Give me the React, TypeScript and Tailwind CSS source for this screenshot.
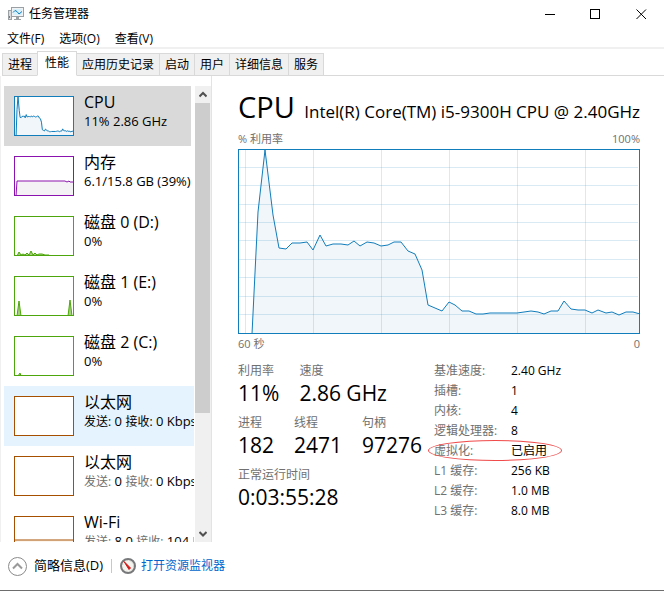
import React from "react";
import clsx from "clsx";

type Point = [number, number];

interface SparkProps {
  points: Point[];
  height: number;
  stroke: string;
  fill: string;
}

interface Resource {
  name: string;
  detail: React.ReactNode;
  stroke: string;
  fill: string;
  points: Point[];
  width?: number;
  height?: number;
  state?: "selected" | "hover";
}

const CHART_W = 402;
const CHART_H = 185;

const cpuPoints: Point[] = [
  [14, 185], [20, 63], [27, 1], [35, 66], [41, 99], [48, 100], [54, 94], [62, 94], [69, 93],
  [75, 101], [82, 86], [88, 97], [95, 95], [103, 95], [110, 96], [116, 92], [122, 97], [129, 93],
  [136, 94], [143, 97], [150, 96], [156, 93], [163, 93], [170, 102], [177, 105], [184, 121],
  [190, 156], [197, 159], [204, 162], [211, 153], [217, 156], [224, 162], [231, 162], [238, 165],
  [245, 165], [252, 164], [279, 164], [286, 163], [293, 162], [300, 163], [306, 165], [313, 162],
  [320, 162], [326, 152], [333, 160], [340, 161], [347, 161], [354, 164], [360, 161], [368, 164],
  [374, 163], [381, 166], [388, 163], [395, 163], [402, 165],
];

const gridX = [7, 75, 143, 211, 279, 347];
const gridY = [19, 37, 56, 74, 92, 111, 129, 148, 166];

const green = { stroke: "#4da60c", fill: "#a6d07f" };
const brown = { stroke: "#a74f01", fill: "#fdf6ee" };

const Rates = ({ send, receive, dark }: { send: string; receive: string; dark?: boolean }) => (
  <>
    <span className={clsx("text-[12px]", !dark && "text-[#707070]")}>发送:</span> {send}{" "}
    <span className={clsx("text-[12px]", !dark && "text-[#707070]")}>接收:</span> {receive}
  </>
);

const resources: Resource[] = [
  {
    name: "CPU",
    detail: "11% 2.86 GHz",
    stroke: "#117dbb",
    fill: "#f1f6fa",
    points: cpuPoints,
    width: CHART_W,
    height: CHART_H,
    state: "selected",
  },
  {
    name: "内存",
    detail: "6.1/15.8 GB (39%)",
    stroke: "#8b12ae",
    fill: "#f4f2f4",
    points: [[2, 40], [3, 25], [51, 25], [53, 26], [55, 25], [56, 26], [60, 26]],
  },
  {
    name: "磁盘 0 (D:)",
    detail: "0%",
    ...green,
    points: [
      [3, 40], [5, 36], [7, 39], [9, 38], [11, 39], [13, 37], [15, 39], [17, 35], [19, 39],
      [21, 37], [23, 39], [25, 38], [28, 38], [31, 39], [35, 39], [36, 40],
    ],
  },
  {
    name: "磁盘 1 (E:)",
    detail: "0%",
    ...green,
    points: [[3, 40], [5, 25], [7, 40], [54, 40], [56, 24], [58, 40]],
  },
  {
    name: "磁盘 2 (C:)",
    detail: "0%",
    ...green,
    points: [[4, 40], [6, 37], [7, 40]],
  },
  {
    name: "以太网",
    detail: <Rates send="0" receive="0 Kbps" dark />,
    ...brown,
    points: [],
    state: "hover",
  },
  {
    name: "以太网",
    detail: <Rates send="0" receive="0 Kbps" />,
    ...brown,
    points: [],
  },
  {
    name: "Wi-Fi",
    detail: <Rates send="8.0" receive="104 Kbps" />,
    stroke: "#a74f01",
    fill: "#fdf6ee",
    points: [[0, 24], [60, 24]],
  },
];

const tabs = ["进程", "性能", "应用历史记录", "启动", "用户", "详细信息", "服务"];

const stats = [
  [
    { label: "利用率", value: "11%" },
    { label: "速度", value: "2.86 GHz" },
  ],
  [
    { label: "进程", value: "182" },
    { label: "线程", value: "2471" },
    { label: "句柄", value: "97276" },
  ],
  [{ label: "正常运行时间", value: "0:03:55:28" }],
];

const specs = [
  { label: "基准速度:", value: "2.40 GHz" },
  { label: "插槽:", value: "1" },
  { label: "内核:", value: "4" },
  { label: "逻辑处理器:", value: "8" },
  { label: "虚拟化:", value: "已启用", circled: true },
  { label: "L1 缓存:", value: "256 KB" },
  { label: "L2 缓存:", value: "1.0 MB" },
  { label: "L3 缓存:", value: "8.0 MB" },
];

// Filled line, clipped by the box around it
const Spark = ({ points, height, stroke, fill }: SparkProps) => {
  if (!points.length) return null;
  const line = points.map((p) => p.join(",")).join(" ");
  const area = `${points[0][0]},${height} ${line} ${points[points.length - 1][0]},${height}`;
  return (
    <>
      <polygon points={area} fill={fill} />
      <polyline points={line} fill="none" stroke={stroke} vectorEffect="non-scaling-stroke" />
    </>
  );
};

const ResourceItem = ({ item }: { item: Resource }) => {
  const { name, detail, stroke, fill, points, width = 60, height = 40, state } = item;
  return (
    <button
      type="button"
      className={clsx(
        "flex h-[60px] shrink-0 gap-[10px] overflow-hidden pl-[10px] text-left",
        state === "selected" && "mr-[3px] bg-[#d9d9d9]",
        state === "hover" && "bg-[#e5f3ff]"
      )}
    >
      <svg
        className="mt-[10px] h-[40px] w-[60px] shrink-0 bg-white"
        viewBox={`0 0 ${width} ${height}`}
        preserveAspectRatio="none"
      >
        <Spark points={points} height={height} stroke={stroke} fill={fill} />
        <rect
          width={width}
          height={height}
          fill="none"
          stroke={stroke}
          strokeWidth="2"
          vectorEffect="non-scaling-stroke"
        />
      </svg>
      <span className="pt-[6px] whitespace-nowrap">
        <span className="block text-[16px] leading-[20px]">{name}</span>
        <span className="block text-[13px] leading-[18px]">{detail}</span>
      </span>
    </button>
  );
};

const TitleBar = () => (
  <header className="flex h-[28px] shrink-0 items-center pl-[8px]">
    <svg className="h-[16px] w-[16px]" viewBox="0 0 16 16">
      <rect x="0.5" y="4.5" width="3" height="9" fill="#d8dadb" stroke="#9aa0a4" />
      <rect x="1" y="10" width="1" height="2" fill="#3aa655" />
      <rect x="3.5" y="1.5" width="12" height="9" fill="#f0f2f3" stroke="#9aa0a4" />
      <rect x="5" y="3" width="9" height="6" fill="#d6f1fc" />
      <path d="M5 6.5 L7 4.5 L9 5.5 L11 8 L14 5.5" fill="none" stroke="#117dbb" />
      <path d="M8 11h3v2h2v1H6v-1h2z" fill="#9aa0a4" />
    </svg>
    <h1 className="ml-[5px] flex-1 text-[12px]">任务管理器</h1>
    <button type="button" aria-label="最小化" className="flex h-full w-[46px] items-center justify-center">
      <svg className="h-[11px] w-[11px]" viewBox="0 0 11 11" stroke="#000">
        <path d="M0 5.5h10" />
      </svg>
    </button>
    <button type="button" aria-label="最大化" className="flex h-full w-[45px] items-center justify-center">
      <svg className="h-[11px] w-[11px]" viewBox="0 0 11 11" fill="none" stroke="#000">
        <rect x="0.5" y="0.5" width="9" height="9" />
      </svg>
    </button>
    <button type="button" aria-label="关闭" className="flex h-full w-[46px] items-center justify-center">
      <svg className="h-[11px] w-[11px]" viewBox="0 0 11 11" stroke="#000">
        <path d="M0.5 0.5l9.5 9.5M10 0.5l-9.5 9.5" />
      </svg>
    </button>
  </header>
);

const ScrollBar = () => (
  <div className="flex w-[16px] shrink-0 flex-col bg-[#f0f0f0]">
    <button type="button" aria-label="向上" className="flex h-[17px] items-center justify-center">
      <svg className="h-[8px] w-[8px]" viewBox="0 0 8 8" fill="none" stroke="#505050" strokeWidth="2">
        <path d="M0.5 5.5L4 2l3.5 3.5" />
      </svg>
    </button>
    <div className="mr-px h-[310px] bg-[#cdcdcd]" />
    <button type="button" aria-label="向下" className="mt-auto flex h-[17px] items-center justify-center">
      <svg className="h-[8px] w-[8px]" viewBox="0 0 8 8" fill="none" stroke="#505050" strokeWidth="2">
        <path d="M0.5 2L4 5.5L7.5 2" />
      </svg>
    </button>
  </div>
);

const CpuChart = () => (
  <svg
    className="block h-[185px] w-full"
    viewBox={`0 0 ${CHART_W} ${CHART_H}`}
    preserveAspectRatio="none"
  >
    <Spark points={cpuPoints} height={CHART_H} stroke="#117dbb" fill="#f1f6fa" />
    <g stroke="#117dbb" strokeOpacity="0.16">
      {gridX.map((x) => (
        <path key={x} d={`M${x + 0.5} 1V184`} vectorEffect="non-scaling-stroke" />
      ))}
      {gridY.map((y) => (
        <path key={y} d={`M1 ${y - 0.5}H400`} vectorEffect="non-scaling-stroke" />
      ))}
    </g>
    <rect
      width={CHART_W}
      height={CHART_H}
      fill="none"
      stroke="#117dbb"
      strokeWidth="2"
      vectorEffect="non-scaling-stroke"
    />
  </svg>
);

export default function App() {
  return (
    <div className="flex h-screen flex-col overflow-hidden border-b border-[#6d6d6d] bg-white font-['Open_Sans','Noto_Sans_CJK_SC',sans-serif] text-[12px] text-black">
      <TitleBar />

      <nav className="flex h-[21px] shrink-0 items-center gap-[15px] border-b-2 border-[#f0f0f0] pt-[2px] pl-[7px]">
        <button type="button">文件(F)</button>
        <button type="button">选项(O)</button>
        <button type="button">查看(V)</button>
      </nav>

      <div role="tablist" className="flex h-[27px] shrink-0 items-end pl-[2px]">
        {tabs.map((tab) => {
          const active = tab === "性能";
          return (
            <button
              key={tab}
              type="button"
              role="tab"
              aria-selected={active}
              className={clsx(
                "-mr-px border border-[#d9d9d9]",
                active
                  ? "z-10 h-[25px] border-b-white bg-white px-[7px] pb-[2px]"
                  : "h-[23px] bg-[#f0f0f0] px-[5px]"
              )}
            >
              {tab}
            </button>
          );
        })}
        <div className="h-px flex-1 bg-[#d9d9d9]" />
      </div>

      <main className="flex min-h-0 flex-1 border-l border-[#f0f0f0]">
        <aside className="flex w-[211px] shrink-0 border-r border-[#e3e3e3] pt-[10px] pl-[3px]">
          <div className="flex min-w-0 flex-1 flex-col overflow-hidden">
            {resources.map((item, i) => (
              <ResourceItem key={i} item={item} />
            ))}
          </div>
          <div className="flex pl-px">
            <ScrollBar />
          </div>
        </aside>

        <section className="min-w-0 flex-1 pt-[11px] pr-[24px] pl-[26px]">
          <div className="flex h-[42px] items-baseline justify-between whitespace-nowrap">
            <h2 className="text-[29px] leading-[40px]">CPU</h2>
            <p className="text-[17px]">Intel(R) Core(TM) i5-9300H CPU @ 2.40GHz</p>
          </div>
          <div className="flex justify-between text-[11px] leading-[20px] text-[#707070]">
            <span>% 利用率</span>
            <span>100%</span>
          </div>
          <CpuChart />
          <div className="flex justify-between text-[11px] leading-[20px] text-[#707070]">
            <span>60 秒</span>
            <span>0</span>
          </div>

          <div className="mt-[7px] flex gap-[12px] whitespace-nowrap">
            <div className="flex w-[184px] shrink-0 flex-col gap-[8px]">
              {stats.map((row, i) => (
                <dl key={i} className="flex gap-[20px]">
                  {row.map((s) => (
                    <div key={s.label}>
                      <dt className="leading-[20px] text-[#707070]">{s.label}</dt>
                      <dd className="text-[21px] leading-[24px]">{s.value}</dd>
                    </div>
                  ))}
                </dl>
              ))}
            </div>
            <dl className="leading-[20px]">
              {specs.map((s) => (
                <div key={s.label} className="relative flex">
                  <dt className="w-[77px] text-[#707070]">{s.label}</dt>
                  <dd>{s.value}</dd>
                  {/* hand-drawn mark around the virtualization row */}
                  {s.circled && (
                    <span className="absolute -top-px -left-[6px] h-[21px] w-[134px] rounded-[50%] border border-[#f04a4a]" />
                  )}
                </div>
              ))}
            </dl>
          </div>
        </section>
      </main>

      <footer className="flex h-[48px] shrink-0 items-center pl-[8px]">
        <button type="button" className="flex items-center gap-[7px] text-[13px]">
          <svg className="h-[19px] w-[19px]" viewBox="0 0 19 19" fill="none">
            <circle cx="9.5" cy="9.5" r="9" stroke="#8a8a8a" />
            <path d="M5 11.5l4.5-4.5 4.5 4.5" stroke="#9a9a9a" strokeWidth="2" />
          </svg>
          简略信息(D)
        </button>
        <div className="mx-[8px] h-[14px] w-px bg-[#c8c8c8]" />
        <a href="#resmon" className="flex items-center gap-[5px] text-[#0066cc]">
          <svg className="h-[16px] w-[16px]" viewBox="0 0 16 16">
            <circle cx="8" cy="8" r="7" fill="#f4f3ee" stroke="#77787a" strokeWidth="2" />
            <circle cx="8" cy="8" r="5.5" fill="none" stroke="#c4c4bd" strokeDasharray="1 2" />
            <path d="M4 3.5L10.5 10l-1.5 1.5z" fill="#d01818" stroke="#d01818" />
          </svg>
          打开资源监视器
        </a>
      </footer>
    </div>
  );
}
